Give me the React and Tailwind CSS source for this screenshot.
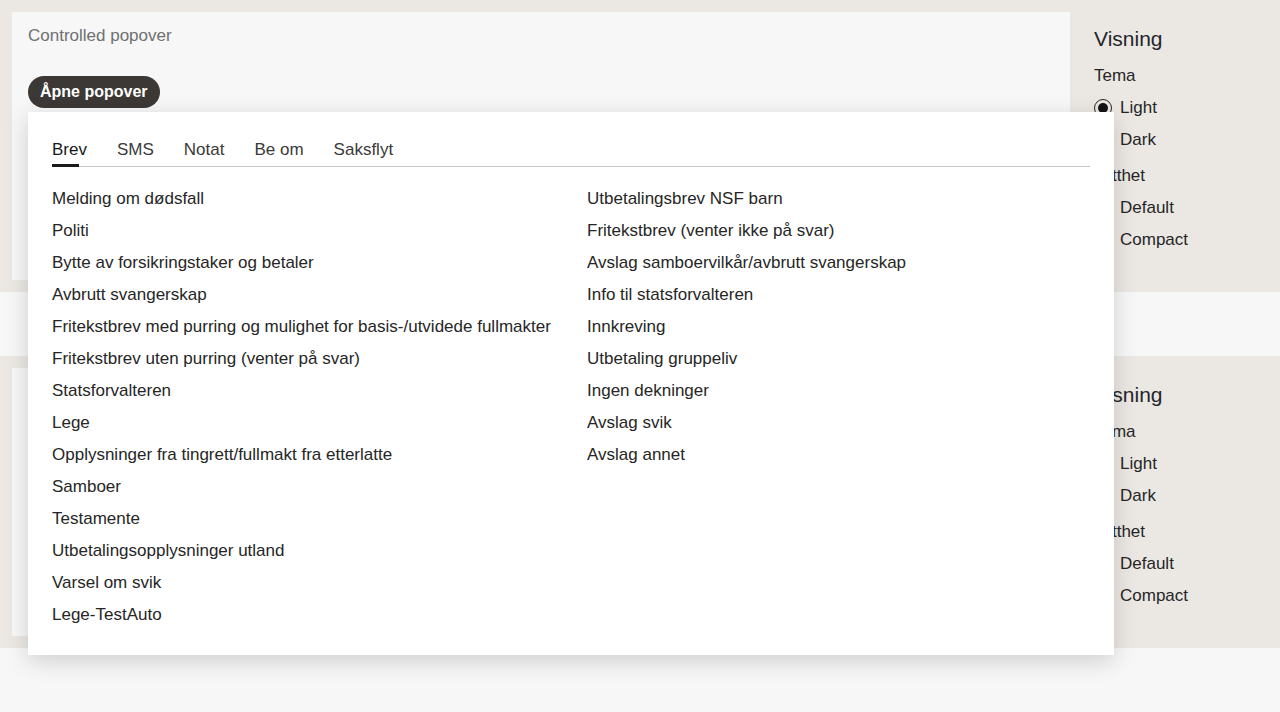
import { useState } from 'react';

const LEFT = [
  'Melding om dødsfall',
  'Politi',
  'Bytte av forsikringstaker og betaler',
  'Avbrutt svangerskap',
  'Fritekstbrev med purring og mulighet for basis-/utvidede fullmakter',
  'Fritekstbrev uten purring (venter på svar)',
  'Statsforvalteren',
  'Lege',
  'Opplysninger fra tingrett/fullmakt fra etterlatte',
  'Samboer',
  'Testamente',
  'Utbetalingsopplysninger utland',
  'Varsel om svik',
  'Lege-TestAuto',
];

const RIGHT = [
  'Utbetalingsbrev NSF barn',
  'Fritekstbrev (venter ikke på svar)',
  'Avslag samboervilkår/avbrutt svangerskap',
  'Info til statsforvalteren',
  'Innkreving',
  'Utbetaling gruppeliv',
  'Ingen dekninger',
  'Avslag svik',
  'Avslag annet',
];

const TABS = ['Brev', 'SMS', 'Notat', 'Be om', 'Saksflyt'];

function Radio({ label, checked }) {
  return (
    <label className="flex items-center gap-2 h-8 text-[17px] text-[#262626]">
      <span className="w-[18px] h-[18px] rounded-full border-[1.5px] border-[#262626] flex items-center justify-center">
        {checked && <span className="w-[10px] h-[10px] rounded-full bg-[#141414]" />}
      </span>
      {label}
    </label>
  );
}

function Sidebar() {
  return (
    <div className="w-[210px] pl-6 pt-[25px]">
      <h2 className="text-[21px] leading-[28px] text-[#23262a]">Visning</h2>
      <div className="mt-[9px] text-[17px] leading-[28px] text-[#262626]">Tema</div>
      <div className="mt-[2px]">
        <Radio label="Light" checked />
        <Radio label="Dark" />
      </div>
      <div className="mt-[6px] text-[17px] leading-[28px] text-[#262626]">Tetthet</div>
      <div className="mt-[2px]">
        <Radio label="Default" />
        <Radio label="Compact" />
      </div>
    </div>
  );
}

function Popover() {
  const [tab, setTab] = useState('Brev');
  return (
    <div className="absolute left-4 top-[100px] w-[1086px] bg-white shadow-[0_6px_22px_rgba(0,0,0,0.16)] px-6 pt-[22px] pb-6 z-10">
      <div className="flex gap-[30px] border-b border-[#c6c6c6]">
        {TABS.map(t => (
          <button key={t} onClick={() => setTab(t)}
            className={`relative h-[32px] text-[17px] ${t === tab ? 'text-[#1a1a1a] font-medium' : 'text-[#3a3a3a]'}`}>
            {t}
            {t === tab && <span className="absolute left-0 -bottom-px w-[27px] h-[3px] bg-[#1a1a1a]" />}
          </button>
        ))}
      </div>
      <div className="grid grid-cols-[535px_1fr] pt-4 text-[17px] text-[#262626]">
        <div>
          {LEFT.map(s => <div key={s} className="h-8 flex items-center">{s}</div>)}
        </div>
        <div>
          {RIGHT.map(s => <div key={s} className="h-8 flex items-center">{s}</div>)}
        </div>
      </div>
    </div>
  );
}

function Story({ withPopover }) {
  return (
    <div className="flex bg-[#ebe8e4] h-[292px]">
      <div className="flex-1 pl-3 py-3">
        <div className="relative h-full bg-[#f7f7f7] px-4 pt-[14px]">
          <div className="text-[17px] leading-[20px] text-[#6f7072]">Controlled popover</div>
          <button className="mt-[30px] h-8 px-3 rounded-full bg-[#3b3835] text-white text-[16px] font-semibold">
            Åpne popover
          </button>
          {withPopover && <Popover />}
        </div>
      </div>
      <Sidebar />
    </div>
  );
}

export default function App() {
  return (
    <div className="min-h-[712px] bg-[#f7f7f7]" style={{ fontFamily: '"Liberation Sans", Arial, sans-serif' }}>
      <Story withPopover />
      <div className="h-16" />
      <Story />
      <div className="h-16" />
    </div>
  );
}
